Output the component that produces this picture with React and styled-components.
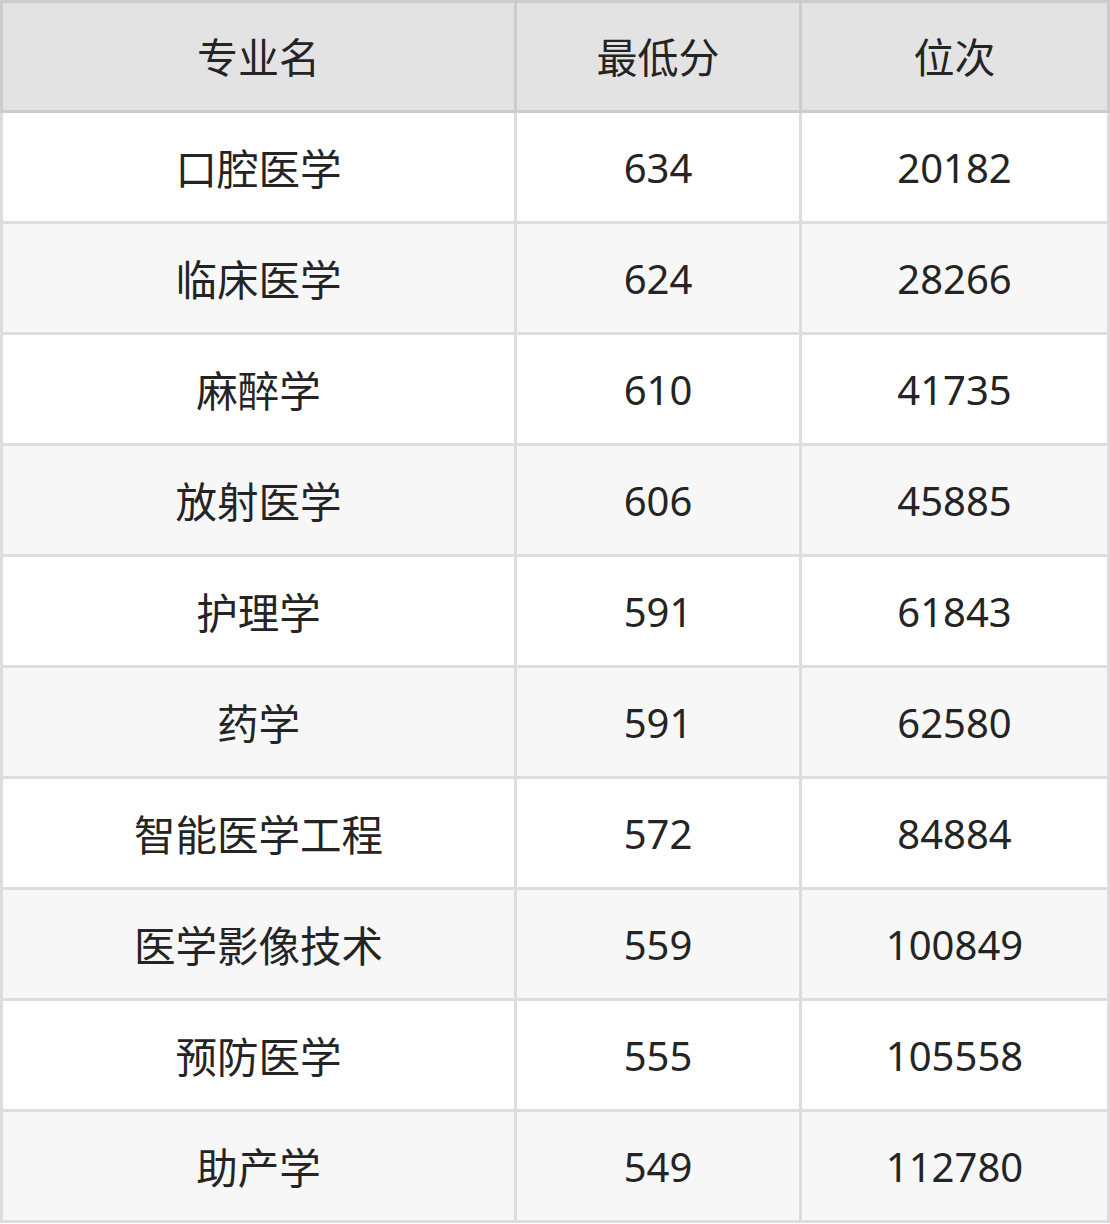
import React from 'react';
import styled, { createGlobalStyle } from 'styled-components';

const GlobalStyle = createGlobalStyle`
  body {
    margin: 0;
    background: #ffffff;
    font-family: "Noto Sans", "Noto Sans CJK SC", sans-serif;
  }
`;

const Table = styled.table`
  width: 1110px;
  border-collapse: collapse;
  table-layout: fixed;
  color: #242424;
`;

const HeadCell = styled.th`
  height: 103px;
  padding: 0 0 4px;
  background: #e3e3e3;
  border: 3px solid #cccccc;
  font-size: 41px;
  font-weight: 400;
  text-align: center;
  vertical-align: middle;
`;

const Row = styled.tr`
  background: ${(p) => (p.$even ? '#f7f7f7' : '#ffffff')};
`;

const Cell = styled.td`
  height: 108px;
  padding: 0;
  border: 3px solid #dddddd;
  font-size: ${(p) => (p.$name ? '41.5px' : '40px')};
  text-align: center;
  vertical-align: middle;
`;

const rows = [
  ['口腔医学', '634', '20182'],
  ['临床医学', '624', '28266'],
  ['麻醉学', '610', '41735'],
  ['放射医学', '606', '45885'],
  ['护理学', '591', '61843'],
  ['药学', '591', '62580'],
  ['智能医学工程', '572', '84884'],
  ['医学影像技术', '559', '100849'],
  ['预防医学', '555', '105558'],
  ['助产学', '549', '112780'],
];

export default function App() {
  return (
    <>
      <GlobalStyle />
      <Table>
        <colgroup>
          <col style={{ width: 514 }} />
          <col style={{ width: 285 }} />
          <col />
        </colgroup>
        <thead>
          <tr>
            <HeadCell>专业名</HeadCell>
            <HeadCell>最低分</HeadCell>
            <HeadCell>位次</HeadCell>
          </tr>
        </thead>
        <tbody>
          {rows.map((r, i) => (
            <Row key={r[0]} $even={i % 2 === 1}>
              <Cell $name>{r[0]}</Cell>
              <Cell>{r[1]}</Cell>
              <Cell>{r[2]}</Cell>
            </Row>
          ))}
        </tbody>
      </Table>
    </>
  );
}
